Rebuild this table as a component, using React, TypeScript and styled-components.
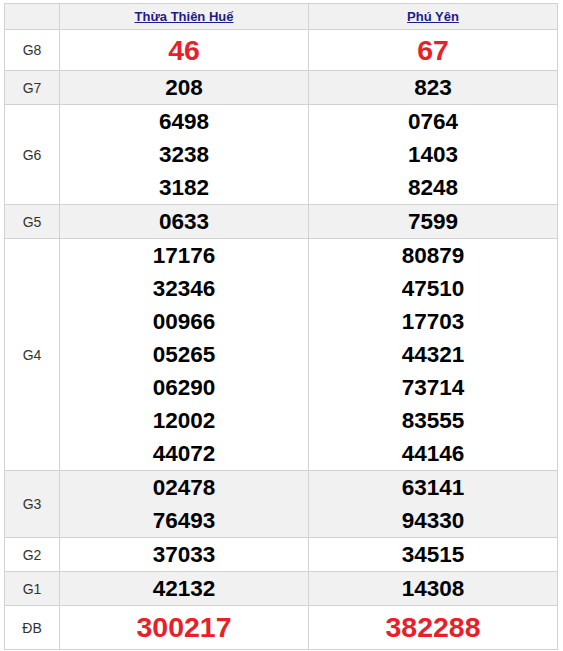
import React from "react";
import styled, { createGlobalStyle } from "styled-components";

const GlobalStyle = createGlobalStyle`
  html, body {
    margin: 0;
    padding: 0;
    background: #ffffff;
    font-family: "Liberation Sans", Arial, sans-serif;
  }
`;

const Page = styled.div`
  padding: 3px 0 0 4px;
`;

const Board = styled.div`
  display: flex;
  flex-direction: column;
  gap: 1px;
  width: 552px;
  background: #d2d2d2;
  border: 1px solid #d2d2d2;
`;

const Row = styled.div`
  display: grid;
  grid-template-columns: 54px 248px 248px;
  gap: 1px;
`;

const Cell = styled.div<{ $shade: boolean }>`
  display: flex;
  flex-direction: column;
  align-items: center;
  justify-content: center;
  background: ${(p) => (p.$shade ? "#f1f1f1" : "#ffffff")};
`;

const Label = styled(Cell)`
  font-size: 14px;
  color: #333333;
`;

const HeadCell = styled(Cell)`
  height: 25px;
`;

const Province = styled.a`
  font-size: 13px;
  font-weight: bold;
  color: #1d1d8a;
  text-decoration: underline;
  cursor: pointer;
`;

const Num = styled.div<{ $big?: boolean; $lh: number }>`
  font-weight: bold;
  font-size: ${(p) => (p.$big ? "28.5px" : "22.5px")};
  line-height: ${(p) => p.$lh}px;
  color: ${(p) => (p.$big ? "#e8202a" : "#000000")};
`;

type Prize = {
  label: string;
  left: string[];
  right: string[];
  big?: boolean;
  lh: number;
};

const prizes: Prize[] = [
  { label: "G8", left: ["46"], right: ["67"], big: true, lh: 40 },
  { label: "G7", left: ["208"], right: ["823"], lh: 33 },
  { label: "G6", left: ["6498", "3238", "3182"], right: ["0764", "1403", "8248"], lh: 33 },
  { label: "G5", left: ["0633"], right: ["7599"], lh: 33 },
  {
    label: "G4",
    left: ["17176", "32346", "00966", "05265", "06290", "12002", "44072"],
    right: ["80879", "47510", "17703", "44321", "73714", "83555", "44146"],
    lh: 33,
  },
  { label: "G3", left: ["02478", "76493"], right: ["63141", "94330"], lh: 33 },
  { label: "G2", left: ["37033"], right: ["34515"], lh: 33 },
  { label: "G1", left: ["42132"], right: ["14308"], lh: 33 },
  { label: "ĐB", left: ["300217"], right: ["382288"], big: true, lh: 43 },
];

export default function App() {
  return (
    <>
      <GlobalStyle />
      <Page>
        <Board>
          <Row>
            <HeadCell $shade />
            <HeadCell $shade>
              <Province>Thừa Thiên Huế</Province>
            </HeadCell>
            <HeadCell $shade>
              <Province>Phú Yên</Province>
            </HeadCell>
          </Row>
          {prizes.map((p, i) => {
            const shade = i % 2 === 1;
            return (
              <Row key={p.label}>
                <Label $shade={shade}>{p.label}</Label>
                <Cell $shade={shade}>
                  {p.left.map((n, k) => (
                    <Num key={k} $big={p.big} $lh={p.lh}>
                      {n}
                    </Num>
                  ))}
                </Cell>
                <Cell $shade={shade}>
                  {p.right.map((n, k) => (
                    <Num key={k} $big={p.big} $lh={p.lh}>
                      {n}
                    </Num>
                  ))}
                </Cell>
              </Row>
            );
          })}
        </Board>
      </Page>
    </>
  );
}
